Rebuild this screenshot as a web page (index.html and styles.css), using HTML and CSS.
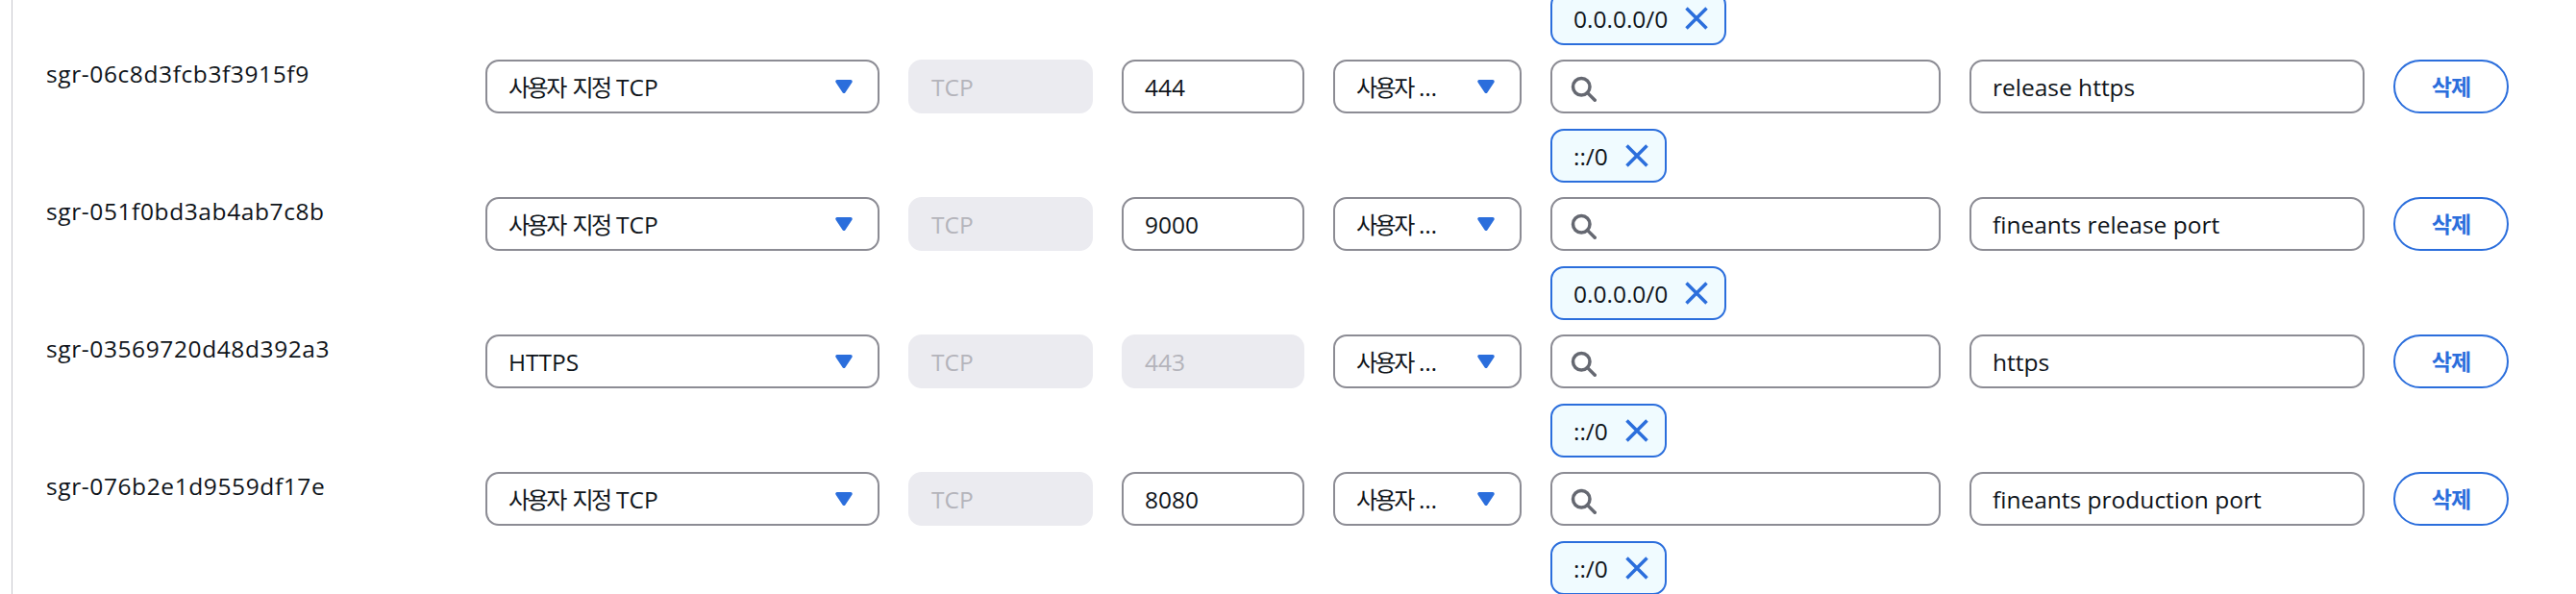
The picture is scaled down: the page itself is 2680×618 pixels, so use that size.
FILE: index.html
```html
<!DOCTYPE html>
<html lang="ko">
<head>
<meta charset="utf-8">
<title>인바운드 규칙 편집</title>
<link rel="stylesheet" href="styles.css">
</head>
<body>
<div class="panel">
  <div class="rules">
    <div class="rule rule-tail">
      <div class="source">
        <div class="tokens">
          <span class="token"><span class="token-label">0.0.0.0/0</span><svg class="x" viewBox="0 0 16 16"><path d="m2 2 12 12M14 2 2 14"/></svg></span>
        </div>
      </div>
    </div>

    <div class="rule">
      <div class="id">sgr-06c8d3fcb3f3915f9</div>
      <div class="field select"><span class="value"><span class="ko">사용자 지정</span> TCP</span><svg class="caret" viewBox="0 0 16 16"><path d="M4 5h8l-4 6-4-6z"/></svg></div>
      <div class="field disabled">TCP</div>
      <div class="field">444</div>
      <div class="field select" title="사용자 지정"><span class="value"><span class="ko">사용자</span> …</span><svg class="caret" viewBox="0 0 16 16"><path d="M4 5h8l-4 6-4-6z"/></svg></div>
      <div class="source">
        <div class="field search"><svg class="mag" viewBox="0 0 16 16"><circle cx="7" cy="7" r="5"/><path d="m15 15-4.5-4.5"/></svg></div>
        <div class="tokens">
          <span class="token"><span class="token-label">::/0</span><svg class="x" viewBox="0 0 16 16"><path d="m2 2 12 12M14 2 2 14"/></svg></span>
        </div>
      </div>
      <div class="field">release https</div>
      <button class="btn ko" type="button">삭제</button>
    </div>

    <div class="rule">
      <div class="id">sgr-051f0bd3ab4ab7c8b</div>
      <div class="field select"><span class="value"><span class="ko">사용자 지정</span> TCP</span><svg class="caret" viewBox="0 0 16 16"><path d="M4 5h8l-4 6-4-6z"/></svg></div>
      <div class="field disabled">TCP</div>
      <div class="field">9000</div>
      <div class="field select" title="사용자 지정"><span class="value"><span class="ko">사용자</span> …</span><svg class="caret" viewBox="0 0 16 16"><path d="M4 5h8l-4 6-4-6z"/></svg></div>
      <div class="source">
        <div class="field search"><svg class="mag" viewBox="0 0 16 16"><circle cx="7" cy="7" r="5"/><path d="m15 15-4.5-4.5"/></svg></div>
        <div class="tokens">
          <span class="token"><span class="token-label">0.0.0.0/0</span><svg class="x" viewBox="0 0 16 16"><path d="m2 2 12 12M14 2 2 14"/></svg></span>
        </div>
      </div>
      <div class="field">fineants release port</div>
      <button class="btn ko" type="button">삭제</button>
    </div>

    <div class="rule">
      <div class="id">sgr-03569720d48d392a3</div>
      <div class="field select"><span class="value">HTTPS</span><svg class="caret" viewBox="0 0 16 16"><path d="M4 5h8l-4 6-4-6z"/></svg></div>
      <div class="field disabled">TCP</div>
      <div class="field disabled">443</div>
      <div class="field select" title="사용자 지정"><span class="value"><span class="ko">사용자</span> …</span><svg class="caret" viewBox="0 0 16 16"><path d="M4 5h8l-4 6-4-6z"/></svg></div>
      <div class="source">
        <div class="field search"><svg class="mag" viewBox="0 0 16 16"><circle cx="7" cy="7" r="5"/><path d="m15 15-4.5-4.5"/></svg></div>
        <div class="tokens">
          <span class="token"><span class="token-label">::/0</span><svg class="x" viewBox="0 0 16 16"><path d="m2 2 12 12M14 2 2 14"/></svg></span>
        </div>
      </div>
      <div class="field">https</div>
      <button class="btn ko" type="button">삭제</button>
    </div>

    <div class="rule">
      <div class="id">sgr-076b2e1d9559df17e</div>
      <div class="field select"><span class="value"><span class="ko">사용자 지정</span> TCP</span><svg class="caret" viewBox="0 0 16 16"><path d="M4 5h8l-4 6-4-6z"/></svg></div>
      <div class="field disabled">TCP</div>
      <div class="field">8080</div>
      <div class="field select" title="사용자 지정"><span class="value"><span class="ko">사용자</span> …</span><svg class="caret" viewBox="0 0 16 16"><path d="M4 5h8l-4 6-4-6z"/></svg></div>
      <div class="source">
        <div class="field search"><svg class="mag" viewBox="0 0 16 16"><circle cx="7" cy="7" r="5"/><path d="m15 15-4.5-4.5"/></svg></div>
        <div class="tokens">
          <span class="token"><span class="token-label">::/0</span><svg class="x" viewBox="0 0 16 16"><path d="m2 2 12 12M14 2 2 14"/></svg></span>
        </div>
      </div>
      <div class="field">fineants production port</div>
      <button class="btn ko" type="button">삭제</button>
    </div>
  </div>
</div>
</body>
</html>
```

FILE: styles.css
```css
* { box-sizing: border-box; }
html, body { margin: 0; padding: 0; }
body {
  background: #ffffff;
  color: #0f141a;
  font-family: "Open Sans", "Noto Sans CJK KR", sans-serif;
  font-size: 24.5px;
  line-height: 35px;
  height: 618px;
  overflow: hidden;
}
.panel {
  margin-left: 12px;
  border-left: 1px solid #c6c6cd;
  height: 618px;
  padding-left: 35px;
  overflow: hidden;
}
.rules {
  display: flex;
  flex-direction: column;
  gap: 15px;
  margin-top: -9px;
}
.rule {
  display: grid;
  grid-template-columns: 427px 410px 192px 190px 196px 406px 411px 120px;
  column-gap: 30px;
  align-items: start;
}
.rule-tail .source { grid-column: 6; }
.id {
  white-space: nowrap;
  letter-spacing: 0.6px;
  margin-top: -3px;
}
.ko {
  font-size: 24px;
  letter-spacing: -2.5px;
  word-spacing: 4px;
}
.field {
  height: 56px;
  border: 2px solid #8c8c94;
  border-radius: 14px;
  background: #ffffff;
  display: flex;
  align-items: center;
  padding: 0 21px 0 22px;
  white-space: nowrap;
}
.field.disabled {
  background: #ebebf0;
  border-color: #ebebf0;
  color: #b4b4bb;
}
.select { justify-content: space-between; gap: 10px; }
.select .value { flex: 1; min-width: 0; }
.caret { width: 28px; height: 28px; flex: none; }
.caret path {
  fill: #2b6edc;
  stroke: #2b6edc;
  stroke-width: 2;
  stroke-linejoin: round;
}
.source {
  display: flex;
  flex-direction: column;
  align-items: flex-start;
  gap: 16px;
}
.search { width: 100%; padding-left: 18px; }
.mag { width: 28px; height: 28px; margin-top: 4px; }
.mag circle, .mag path {
  fill: none;
  stroke: #656871;
  stroke-width: 2;
  stroke-linecap: round;
}
.tokens { display: flex; gap: 8px; }
.token {
  display: flex;
  align-items: center;
  gap: 16px;
  height: 56px;
  padding: 0 15px 0 22px;
  border: 2px solid #2b6edc;
  border-radius: 14px;
  background: #f0fbff;
  white-space: nowrap;
}
.x { width: 28px; height: 28px; }
.x path {
  fill: none;
  stroke: #2b6edc;
  stroke-width: 2;
}
.btn {
  height: 56px;
  width: 120px;
  padding: 0;
  border: 2px solid #2b6edc;
  border-radius: 28px;
  background: #ffffff;
  color: #2b6edc;
  font-family: "Open Sans", "Noto Sans CJK KR", sans-serif;
  font-weight: 700;
  font-size: 23px;
  line-height: 35px;
  letter-spacing: -1px;
}
```
